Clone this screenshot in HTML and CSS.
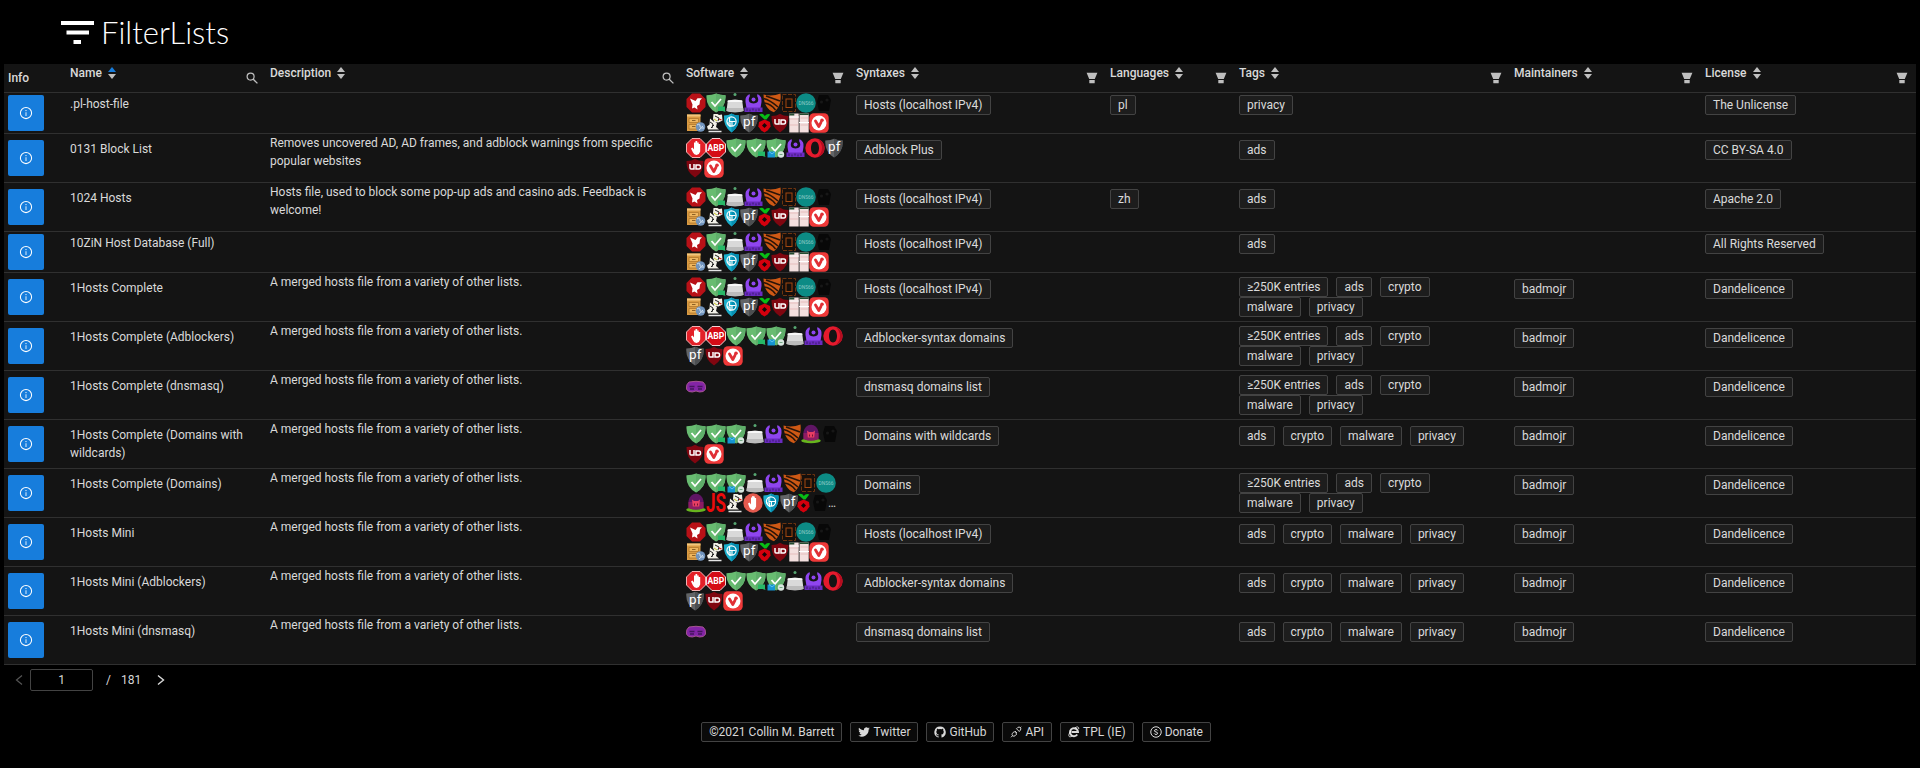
FILE: index.html
```html
<!DOCTYPE html>
<html lang="en">
<head>
<meta charset="utf-8">
<title>FilterLists</title>
<link rel="stylesheet" href="styles.css">
</head>
<body>
<svg class="sprite" aria-hidden="true">
  <symbol id="info" viewBox="0 0 1024 1024"><path d="M512 64a448 448 0 1 0 0 896 448 448 0 0 0 0-896zm0 820a372 372 0 1 1 0-744 372 372 0 0 1 0 744z"/><path d="M464 336a48 48 0 1 0 96 0 48 48 0 0 0-96 0zm72 112h-48a8 8 0 0 0-8 8v272a8 8 0 0 0 8 8h48a8 8 0 0 0 8-8V456a8 8 0 0 0-8-8z"/></symbol>
  <symbol id="search" viewBox="0 0 12 12"><circle cx="4.600" cy="4.600" r="3.500" fill="none" stroke="currentColor" stroke-width="1.200"/><path d="M7 7l4.400 4.400" stroke="currentColor" stroke-width="1.300"/></symbol>
  <symbol id="funnel" viewBox="0 0 12 12"><path d="M.6.800h10.800L8.800 7H3.200zM3.300 7.900h5.400v2.800q0 .5-.5.500H3.800q-.5 0-.5-.5z" fill="currentColor"/></symbol>
  <symbol id="dove" viewBox="0 0 20 20"><path d="M6 .5h8L19.500 6v8L14 19.500H6L.5 14V6z" fill="#b81117"/><path d="M4 5.500l5.500 2.500 2-2.800 4.500 0-2 2.200-.5 4-2.500 1.500.5 3.500-3-2-2.500 1 .5-4z" fill="#fff"/></symbol>
  <symbol id="shield" viewBox="0 0 20 20"><path d="M.5 2.300Q6 2.200 10 .6q4 1.600 9.500 1.700.8 11.200-9.500 17.200Q-.3 13.500.5 2.300z" fill="#68bc71"/><path d="M10 .6q4 1.600 9.500 1.700.8 11.200-9.500 17.200z" fill="#5fae6a"/><path d="M5.500 9l3.500 4 6-7" fill="none" stroke="#fff" stroke-width="1.800"/></symbol>
  <symbol id="shield-chat" viewBox="0 0 20 20"><use href="#shield" width="20" height="20"/><path d="M12 13.500h7v4l.5 1.500-3-1H12z" fill="#27b867"/></symbol>
  <symbol id="shield-beta" viewBox="0 0 20 20"><use href="#shield" width="20" height="20"/><path d="M1.500 13.500h7.500v6h-7.500z" fill="#1595d2"/><path d="M3 13.500L6 16l3-2.500" stroke="#61c2ee" fill="none"/><circle cx="15" cy="16.500" r="3.200" fill="#d8e6df"/><path d="M13.500 16.500h3" stroke="#73a783"/></symbol>
  <symbol id="router" viewBox="0 0 18 20"><circle cx="9" cy="1.600" r="1.500" fill="#57a772"/><path d="M1.800 7.500Q9 6 16.200 7.500l1.300 10.500Q9 20.500.5 18z" fill="#d9d9d9"/><path d="M.8 15h16.400l.3 3Q9 20.500.5 18z" fill="#bcbcbc"/><path d="M1.800 7.500Q9 6 16.200 7.500l.2 1.500H1.600z" fill="#f8f8f8"/></symbol>
  <symbol id="brush" viewBox="0 0 19 20"><path d="M5.500 1Q.6 3.500 1.500 9L2.500 15h14l1-6Q18.400 3.500 13.500 1 12.500 3 14 5q1.500 5-4.500 5.500Q3.500 10 5 5 6.500 3 5.500 1z" fill="#8f45ef"/><circle cx="9.500" cy="6.500" r="2" fill="#8f45ef"/><path d="M.5 14.500h18v4.500H.5z" fill="#6a2bc0"/><path d="M3 15.500v2.500M6 16.500v2M9 15.500v2M12 16.500v2M15 15.500v2.500" stroke="#3a1a68"/></symbol>
  <symbol id="stripes" viewBox="0 0 18 20"><path d="M.5 1.500Q9 4 17.500.6 19 13 11 19.200 1 16 .5 1.500z" fill="#cf5915"/><path d="M.5 5.500Q7 7 15 14M3 3l14 5M1.500 10Q8 11 12.500 17" stroke="#2a1408" stroke-width="1.600" fill="none"/></symbol>
  <symbol id="frame" viewBox="0 0 14 20"><rect x=".5" y="1.500" width="13" height="17" fill="#160f0b" stroke="#6d3410" stroke-dasharray="4 1.500"/><rect x="4" y="6" width="6" height="8.500" fill="none" stroke="#a44911"/></symbol>
  <symbol id="dnscloak" viewBox="0 0 20 20"><circle cx="10" cy="10" r="9.800" fill="#0c8b85"/><text x="10" y="12" font-size="4.800" text-anchor="middle" fill="#8fc9c5" class="ico-text">DNS66</text></symbol>
  <symbol id="dark" viewBox="0 0 16 20"><path d="M3 2h9l3 5-2 11H3L1 9z" fill="#080808"/><circle cx="5.500" cy="9" r="1.600" fill="#171717"/><circle cx="11" cy="7" r="1.600" fill="#171717"/></symbol>
  <symbol id="cabinet" viewBox="0 0 20 20"><path d="M1 1.500h13.500v16.500H1z" fill="#d99a42"/><path d="M1 1.500h13.500v2H1z" fill="#f4c67c"/><path d="M3 5.500h9.500v4H3zM3 11.500h9.500v4.500H3z" fill="#efb65e" stroke="#b0772c" stroke-width=".8"/><path d="M6 7.500h3.500M6 13.500h3.500" stroke="#8c6126"/><circle cx="14.500" cy="14" r="4.800" fill="#7194bd"/><path d="M11 12q3-2 3 1t3 0M13 17q2-3 5-2" stroke="#d0e2f2" fill="none"/></symbol>
  <symbol id="pieces" viewBox="0 0 18 20"><path d="M7.500 1h4l1.500 1 3-.5.500 6-4 2-4-.5-1.500-3zM4 5.500l3.500 3 3.500 1.500-1 4 3 2.500H2l-1-3 2.500-2z" fill="#f3f1e8"/><path d="M9 3l4 2-1 3M4 9l3 2-1 4M8 12l-3 3" stroke="#222" fill="none"/><path d="M8 6l3 2" stroke="#c9cc25"/><path d="M13 6l2.500 1" stroke="#d81b1b" stroke-width="1.300"/><path d="M2.500 18.500h13" stroke="#e6e6e6" stroke-width="1.500"/></symbol>
  <symbol id="cyan" viewBox="0 0 16 20"><path d="M.5 2.500Q5 2.500 8 .5q3 2 7.500 2 1 11-7.500 17Q-.5 13.500.5 2.500z" fill="#1aaecb"/><path d="M8 .5q3 2 7.500 2 1 11-7.500 17z" fill="#078fb2"/><circle cx="8" cy="8.500" r="4.600" fill="none" stroke="#fff" stroke-width="1.200"/><path d="M6 4.500v4h6M8.500 8.500v4.500M3.500 10h3v4" stroke="#fff" stroke-width="1.100" fill="none"/></symbol>
  <symbol id="pf" viewBox="0 0 18 20"><path d="M.3 2.500Q6 2.500 9 .8q3 1.700 8.700 1.700.8 11-8.700 17Q-.5 13.500.3 2.500z" fill="#626466"/><path d="M9 .8q3 1.700 8.700 1.700.8 11-8.700 17z" fill="#4c4e50"/><text x="9.200" y="12.500" font-size="13.500" text-anchor="middle" fill="#fff" class="ico-text">pf</text></symbol>
  <symbol id="berry" viewBox="0 0 13 20"><path d="M6.500 6.500L1 1.500Q5-.5 6.800 3 9 .2 12.300 1.500L8.500 6.500z" fill="#08bd16"/><path d="M6.500 6.500l5.500 2.500.6 4.500-3 4-3.100 2-3.200-2-3-4L1 9z" fill="#d4000d"/><path d="M6.500 10L9 12.500l-2.500 2.500L4 12.500z" fill="#160508"/></symbol>
  <symbol id="ublock" viewBox="0 0 18 20"><path d="M.5 3Q6 3 9 .7 12 3 17.500 3q.5 11-8.500 16.500Q0 14 .5 3z" fill="#800610"/><path d="M4 6v4q0 1 1 1h3v-5M10 7h3q1.500 0 1.500 2t-1.500 2h-3z" fill="none" stroke="#fff" stroke-width="1.500"/></symbol>
  <symbol id="pages" viewBox="0 0 20 20"><path d="M.3.500h9.400v19H.3zM10.500.500h9.200v19h-9.200z" fill="#f4e0df"/><path d="M.3.500h5v2h-5zM10.500.500h9.200v1.500h-9.200z" fill="#244c30"/><path d="M1 6h8M1 12h8M11.500 5h7.500M11.500 12h7.500" stroke="#e6bdbc"/><path d="M0 4h10M10 9.500h10" stroke="#fff"/></symbol>
  <symbol id="vivaldi" viewBox="0 0 20 20"><rect x=".3" y=".3" width="19.400" height="19.400" rx="4.500" fill="#ef3939"/><circle cx="10" cy="10" r="7.500" fill="#fff"/><path d="M6.500 8l3.300 5.500L12 9.300" fill="none" stroke="#e02f35" stroke-width="2.800" stroke-linecap="round" stroke-linejoin="round"/><circle cx="13" cy="7.200" r="1.800" fill="#e02f35"/></symbol>
  <symbol id="hand" viewBox="0 0 20 20"><path d="M6 .5h8L19.500 6v8L14 19.500H6L.5 14V6z" fill="#e32028" stroke="#f3b0b1"/><path d="M5 10.500l1.500-1 1.500 2v-7h1.500V3h1.700v1.500h1.500V6h1.500v7.500q-.7 3-3.700 3.500-2.500-.3-3.500-2.500z" fill="#fff"/></symbol>
  <symbol id="hand-round" viewBox="0 0 20 20"><circle cx="10" cy="10" r="9.700" fill="#e45a4e"/><path d="M5 10.500l1.500-1 1.500 2v-7h1.200V3h1.300v7V3.500h1.300V10 5h1.300v8.500q-.7 3-3 3.500-2.500-.3-3.600-2.500z" fill="#fff"/></symbol>
  <symbol id="abp" viewBox="0 0 20 20"><path d="M6 .5h8L19.500 6v8L14 19.500H6L.5 14V6z" fill="#d50c16" stroke="#f4d3d4"/><text x="10" y="13" font-size="8.600" text-anchor="middle" fill="#fff" class="ico-bold">ABP</text></symbol>
  <symbol id="opera" viewBox="0 0 20 20"><path fill-rule="evenodd" d="M10 .3a9.700 9.700 0 1 0 0 19.400A9.700 9.700 0 0 0 10 .3zm0 3.200c2.300 0 4 2.800 4 6.500s-1.700 6.500-4 6.500S6 13.700 6 10s1.700-6.500 4-6.500z" fill="#e51a2d"/><path d="M12.500 1Q20 4 19.500 11q-1 6.500-7 8.200Q17 15 17 10T12.500 1z" fill="#b50d20"/></symbol>
  <symbol id="dome" viewBox="0 0 20 20"><ellipse cx="10" cy="16.800" rx="9.800" ry="2.500" fill="#67b51e"/><path d="M2.500 15V8Q4 1 10 .8 16 1 17.500 8v7Q10 18 2.500 15z" fill="#5f1564"/><path d="M2.500 9h15v6Q10 18 2.500 15z" fill="#8d1c63"/><path d="M6 6.500l2 1.500h4l2-1.500-.8 7H6.800z" fill="#e83e63"/><path d="M8.500 10.500v2M11.500 10.500v2" stroke="#701335"/></symbol>
  <symbol id="js" viewBox="0 0 20 20"><text x="10" y="18.800" font-size="25" text-anchor="middle" fill="#ed0b0b" class="ico-bold" textLength="20" lengthAdjust="spacingAndGlyphs">JS</text></symbol>
  <symbol id="mask" viewBox="0 0 20 20"><path d="M3 5Q10 3.500 17 5q3 2 2.600 7-1.600 3.500-6 3L10 14l-3.600 1q-4.400.5-6-3Q0 7 3 5z" fill="#8324a6" stroke="#ad5b94" stroke-width=".9"/><path d="M3.500 9.500h5M11.500 9.500h5M4 12h4M12 12h4" stroke="#43155c" stroke-width="1.300"/></symbol>

  <symbol id="set-hosts" viewBox="0 0 160 40">
    <use href="#dove" width="20" height="20"/><use href="#shield-chat" x="20" width="20" height="20"/><use href="#router" x="40" width="18" height="20"/><use href="#brush" x="58" width="19" height="20"/><use href="#stripes" x="77" width="18" height="20"/><use href="#frame" x="96" width="14" height="20"/><use href="#dnscloak" x="110" width="20" height="20"/><use href="#dark" x="130" width="16" height="20"/>
    <use href="#cabinet" y="20" width="20" height="20"/><use href="#pieces" x="20" y="20" width="18" height="20"/><use href="#cyan" x="37.500" y="20" width="16" height="20"/><use href="#pf" x="54" y="20" width="18" height="20"/><use href="#berry" x="72" y="20" width="13" height="20"/><use href="#ublock" x="85" y="20" width="18" height="20"/><use href="#pages" x="103" y="20" width="20" height="20"/><use href="#vivaldi" x="123" y="20" width="20" height="20"/>
  </symbol>
  <symbol id="set-abp" viewBox="0 0 160 40">
    <use href="#hand" width="20" height="20"/><use href="#abp" x="20" width="20" height="20"/><use href="#shield" x="40" width="20" height="20"/><use href="#shield-chat" x="60" width="20" height="20"/><use href="#shield-beta" x="80" width="20" height="20"/><use href="#brush" x="100" width="19" height="20"/><use href="#opera" x="119" width="20" height="20"/><use href="#pf" x="139" width="18" height="20"/>
    <use href="#ublock" y="20" width="18" height="20"/><use href="#vivaldi" x="18" y="20" width="20" height="20"/>
  </symbol>
  <symbol id="set-adblockers" viewBox="0 0 160 40">
    <use href="#hand" width="20" height="20"/><use href="#abp" x="20" width="20" height="20"/><use href="#shield" x="40" width="20" height="20"/><use href="#shield-chat" x="60" width="20" height="20"/><use href="#shield-beta" x="80" width="20" height="20"/><use href="#router" x="100" width="18" height="20"/><use href="#brush" x="118" width="19" height="20"/><use href="#opera" x="137" width="20" height="20"/>
    <use href="#pf" y="20" width="18" height="20"/><use href="#ublock" x="19" y="20" width="18" height="20"/><use href="#vivaldi" x="37" y="20" width="20" height="20"/>
  </symbol>
  <symbol id="set-wildcards" viewBox="0 0 160 40">
    <use href="#shield" width="20" height="20"/><use href="#shield-chat" x="20" width="20" height="20"/><use href="#shield-beta" x="40" width="20" height="20"/><use href="#router" x="60" width="18" height="20"/><use href="#brush" x="78" width="19" height="20"/><use href="#stripes" x="97" width="18" height="20"/><use href="#dome" x="115" width="20" height="20"/><use href="#dark" x="136" width="16" height="20"/>
    <use href="#ublock" y="20" width="18" height="20"/><use href="#vivaldi" x="18" y="20" width="20" height="20"/>
  </symbol>
  <symbol id="set-domains" viewBox="0 0 160 40">
    <use href="#shield" width="20" height="20"/><use href="#shield-chat" x="20" width="20" height="20"/><use href="#shield-beta" x="40" width="20" height="20"/><use href="#router" x="60" width="18" height="20"/><use href="#brush" x="78" width="19" height="20"/><use href="#stripes" x="97" width="18" height="20"/><use href="#frame" x="115" width="14" height="20"/><use href="#dnscloak" x="130" width="20" height="20"/>
    <use href="#dome" y="20" width="20" height="20"/><use href="#js" x="20" y="20" width="20" height="20"/><use href="#pieces" x="40" y="20" width="18" height="20"/><use href="#hand-round" x="57" y="20" width="20" height="20"/><use href="#cyan" x="77" y="20" width="16" height="20"/><use href="#pf" x="94" y="20" width="18" height="20"/><use href="#berry" x="111" y="20" width="13" height="20"/><use href="#dark" x="126" y="20" width="16" height="20"/>
    <text x="142" y="33.500" font-size="12" fill="#d0d0d0" class="ico-text">…</text>
  </symbol>
</svg>

<header class="site-header">
  <svg class="logo-mark" viewBox="0 0 33 23"><path d="M0 0h33v4H0zM5.500 9.500h22.500v4H5.500zM12.500 19h7.500v4h-7.500z" fill="#fff"/></svg>
  <h1 class="logo-text">FilterLists</h1>
</header>

<main class="table">
  <div class="row head">
    <div class="cell info-head">Info</div>
    <div class="cell"><span class="label">Name</span><span class="sort asc"></span><svg class="filter"><use href="#search"/></svg></div>
    <div class="cell"><span class="label">Description</span><span class="sort"></span><svg class="filter"><use href="#search"/></svg></div>
    <div class="cell"><span class="label">Software</span><span class="sort"></span><svg class="filter"><use href="#funnel"/></svg></div>
    <div class="cell"><span class="label">Syntaxes</span><span class="sort"></span><svg class="filter"><use href="#funnel"/></svg></div>
    <div class="cell"><span class="label">Languages</span><span class="sort"></span><svg class="filter"><use href="#funnel"/></svg></div>
    <div class="cell"><span class="label">Tags</span><span class="sort"></span><svg class="filter"><use href="#funnel"/></svg></div>
    <div class="cell"><span class="label">Maintainers</span><span class="sort"></span><svg class="filter"><use href="#funnel"/></svg></div>
    <div class="cell"><span class="label">License</span><span class="sort"></span><svg class="filter"><use href="#funnel"/></svg></div>
  </div>

  <div class="row short">
    <div class="cell"><button class="info"><svg><use href="#info"/></svg></button></div>
    <div class="cell name">.pl-host-file</div>
    <div class="cell desc"></div>
    <div class="cell"><svg class="set"><use href="#set-hosts"/></svg></div>
    <div class="cell tags"><span class="tag">Hosts (localhost IPv4)</span></div>
    <div class="cell tags"><span class="tag">pl</span></div>
    <div class="cell tags"><span class="tag">privacy</span></div>
    <div class="cell tags"></div>
    <div class="cell tags"><span class="tag">The Unlicense</span></div>
  </div>
  <div class="row">
    <div class="cell"><button class="info"><svg><use href="#info"/></svg></button></div>
    <div class="cell name">0131 Block List</div>
    <div class="cell desc">Removes uncovered AD, AD frames, and adblock warnings from specific popular websites</div>
    <div class="cell"><svg class="set"><use href="#set-abp"/></svg></div>
    <div class="cell tags"><span class="tag">Adblock Plus</span></div>
    <div class="cell tags"></div>
    <div class="cell tags"><span class="tag">ads</span></div>
    <div class="cell tags"></div>
    <div class="cell tags"><span class="tag">CC BY-SA 4.0</span></div>
  </div>
  <div class="row">
    <div class="cell"><button class="info"><svg><use href="#info"/></svg></button></div>
    <div class="cell name">1024 Hosts</div>
    <div class="cell desc">Hosts file, used to block some pop-up ads and casino ads. Feedback is welcome!</div>
    <div class="cell"><svg class="set"><use href="#set-hosts"/></svg></div>
    <div class="cell tags"><span class="tag">Hosts (localhost IPv4)</span></div>
    <div class="cell tags"><span class="tag">zh</span></div>
    <div class="cell tags"><span class="tag">ads</span></div>
    <div class="cell tags"></div>
    <div class="cell tags"><span class="tag">Apache 2.0</span></div>
  </div>
  <div class="row short">
    <div class="cell"><button class="info"><svg><use href="#info"/></svg></button></div>
    <div class="cell name">10ZiN Host Database (Full)</div>
    <div class="cell desc"></div>
    <div class="cell"><svg class="set"><use href="#set-hosts"/></svg></div>
    <div class="cell tags"><span class="tag">Hosts (localhost IPv4)</span></div>
    <div class="cell tags"></div>
    <div class="cell tags"><span class="tag">ads</span></div>
    <div class="cell tags"></div>
    <div class="cell tags"><span class="tag">All Rights Reserved</span></div>
  </div>
  <div class="row">
    <div class="cell"><button class="info"><svg><use href="#info"/></svg></button></div>
    <div class="cell name">1Hosts Complete</div>
    <div class="cell desc">A merged hosts file from a variety of other lists.</div>
    <div class="cell"><svg class="set"><use href="#set-hosts"/></svg></div>
    <div class="cell tags"><span class="tag">Hosts (localhost IPv4)</span></div>
    <div class="cell tags"></div>
    <div class="cell tags double"><span class="tag">≥250K entries</span><span class="tag">ads</span><span class="tag">crypto</span><span class="tag">malware</span><span class="tag">privacy</span></div>
    <div class="cell tags"><span class="tag">badmojr</span></div>
    <div class="cell tags"><span class="tag">Dandelicence</span></div>
  </div>
  <div class="row">
    <div class="cell"><button class="info"><svg><use href="#info"/></svg></button></div>
    <div class="cell name">1Hosts Complete (Adblockers)</div>
    <div class="cell desc">A merged hosts file from a variety of other lists.</div>
    <div class="cell"><svg class="set"><use href="#set-adblockers"/></svg></div>
    <div class="cell tags"><span class="tag">Adblocker-syntax domains</span></div>
    <div class="cell tags"></div>
    <div class="cell tags double"><span class="tag">≥250K entries</span><span class="tag">ads</span><span class="tag">crypto</span><span class="tag">malware</span><span class="tag">privacy</span></div>
    <div class="cell tags"><span class="tag">badmojr</span></div>
    <div class="cell tags"><span class="tag">Dandelicence</span></div>
  </div>
  <div class="row">
    <div class="cell"><button class="info"><svg><use href="#info"/></svg></button></div>
    <div class="cell name">1Hosts Complete (dnsmasq)</div>
    <div class="cell desc">A merged hosts file from a variety of other lists.</div>
    <div class="cell"><svg class="single"><use href="#mask"/></svg></div>
    <div class="cell tags"><span class="tag">dnsmasq domains list</span></div>
    <div class="cell tags"></div>
    <div class="cell tags double"><span class="tag">≥250K entries</span><span class="tag">ads</span><span class="tag">crypto</span><span class="tag">malware</span><span class="tag">privacy</span></div>
    <div class="cell tags"><span class="tag">badmojr</span></div>
    <div class="cell tags"><span class="tag">Dandelicence</span></div>
  </div>
  <div class="row">
    <div class="cell"><button class="info"><svg><use href="#info"/></svg></button></div>
    <div class="cell name">1Hosts Complete (Domains with wildcards)</div>
    <div class="cell desc">A merged hosts file from a variety of other lists.</div>
    <div class="cell"><svg class="set"><use href="#set-wildcards"/></svg></div>
    <div class="cell tags"><span class="tag">Domains with wildcards</span></div>
    <div class="cell tags"></div>
    <div class="cell tags"><span class="tag">ads</span><span class="tag">crypto</span><span class="tag">malware</span><span class="tag">privacy</span></div>
    <div class="cell tags"><span class="tag">badmojr</span></div>
    <div class="cell tags"><span class="tag">Dandelicence</span></div>
  </div>
  <div class="row">
    <div class="cell"><button class="info"><svg><use href="#info"/></svg></button></div>
    <div class="cell name">1Hosts Complete (Domains)</div>
    <div class="cell desc">A merged hosts file from a variety of other lists.</div>
    <div class="cell"><svg class="set"><use href="#set-domains"/></svg></div>
    <div class="cell tags"><span class="tag">Domains</span></div>
    <div class="cell tags"></div>
    <div class="cell tags double"><span class="tag">≥250K entries</span><span class="tag">ads</span><span class="tag">crypto</span><span class="tag">malware</span><span class="tag">privacy</span></div>
    <div class="cell tags"><span class="tag">badmojr</span></div>
    <div class="cell tags"><span class="tag">Dandelicence</span></div>
  </div>
  <div class="row">
    <div class="cell"><button class="info"><svg><use href="#info"/></svg></button></div>
    <div class="cell name">1Hosts Mini</div>
    <div class="cell desc">A merged hosts file from a variety of other lists.</div>
    <div class="cell"><svg class="set"><use href="#set-hosts"/></svg></div>
    <div class="cell tags"><span class="tag">Hosts (localhost IPv4)</span></div>
    <div class="cell tags"></div>
    <div class="cell tags"><span class="tag">ads</span><span class="tag">crypto</span><span class="tag">malware</span><span class="tag">privacy</span></div>
    <div class="cell tags"><span class="tag">badmojr</span></div>
    <div class="cell tags"><span class="tag">Dandelicence</span></div>
  </div>
  <div class="row">
    <div class="cell"><button class="info"><svg><use href="#info"/></svg></button></div>
    <div class="cell name">1Hosts Mini (Adblockers)</div>
    <div class="cell desc">A merged hosts file from a variety of other lists.</div>
    <div class="cell"><svg class="set"><use href="#set-adblockers"/></svg></div>
    <div class="cell tags"><span class="tag">Adblocker-syntax domains</span></div>
    <div class="cell tags"></div>
    <div class="cell tags"><span class="tag">ads</span><span class="tag">crypto</span><span class="tag">malware</span><span class="tag">privacy</span></div>
    <div class="cell tags"><span class="tag">badmojr</span></div>
    <div class="cell tags"><span class="tag">Dandelicence</span></div>
  </div>
  <div class="row">
    <div class="cell"><button class="info"><svg><use href="#info"/></svg></button></div>
    <div class="cell name">1Hosts Mini (dnsmasq)</div>
    <div class="cell desc">A merged hosts file from a variety of other lists.</div>
    <div class="cell"><svg class="single"><use href="#mask"/></svg></div>
    <div class="cell tags"><span class="tag">dnsmasq domains list</span></div>
    <div class="cell tags"></div>
    <div class="cell tags"><span class="tag">ads</span><span class="tag">crypto</span><span class="tag">malware</span><span class="tag">privacy</span></div>
    <div class="cell tags"><span class="tag">badmojr</span></div>
    <div class="cell tags"><span class="tag">Dandelicence</span></div>
  </div>
</main>

<nav class="pager">
  <svg class="arrow disabled" viewBox="0 0 8 12"><path d="M7 1.500L1.500 6 7 10.500" fill="none" stroke="currentColor" stroke-width="1.200"/></svg>
  <span class="page-input">1</span>
  <span class="slash">/</span>
  <span class="total">181</span>
  <svg class="arrow" viewBox="0 0 8 12"><path d="M1 1.500L6.500 6 1 10.500" fill="none" stroke="currentColor" stroke-width="1.400"/></svg>
</nav>

<footer class="site-footer">
  <span class="tag">©2021 Collin M. Barrett</span>
  <span class="tag"><svg viewBox="0 0 24 24"><path fill="currentColor" d="M23.600 4.900c-.8.400-1.700.6-2.700.8 1-.6 1.700-1.500 2-2.600-.9.500-1.900.9-3 1.100a4.700 4.700 0 0 0-8 4.300C8 8.300 4.500 6.400 2.100 3.500a4.700 4.700 0 0 0 1.500 6.200c-.8 0-1.500-.2-2.100-.6v.1c0 2.300 1.600 4.200 3.800 4.600-.7.200-1.400.2-2.100.1.600 1.800 2.300 3.200 4.400 3.200A9.400 9.400 0 0 1 .6 19 13.300 13.300 0 0 0 21.200 7.200c1-.6 1.800-1.400 2.400-2.300z"/></svg>Twitter</span>
  <span class="tag"><svg viewBox="0 0 24 24"><path fill="currentColor" d="M12 1a11.300 11.300 0 0 0-3.600 22c.6.100.8-.3.800-.6v-2c-3.200.7-3.900-1.500-3.900-1.500-.5-1.300-1.200-1.700-1.200-1.700-1-.7.100-.7.100-.7 1.100.1 1.700 1.200 1.700 1.200 1 1.700 2.700 1.200 3.300.9.100-.7.400-1.200.7-1.500-2.600-.3-5.200-1.300-5.200-5.700 0-1.200.4-2.300 1.200-3.100-.1-.3-.5-1.500.1-3 0 0 1-.3 3.200 1.200a11 11 0 0 1 5.800 0c2.200-1.500 3.200-1.200 3.200-1.200.6 1.500.2 2.700.1 3 .8.800 1.200 1.800 1.200 3.100 0 4.400-2.700 5.400-5.300 5.700.4.300.8 1 .8 2.100v3.200c0 .3.200.7.800.6A11.300 11.300 0 0 0 12 1z"/></svg>GitHub</span>
  <span class="tag"><svg viewBox="0 0 24 24"><g fill="none" stroke="currentColor" stroke-width="1.900"><path d="M13 5.500l2.500-2.500q3-2 5 .2 2.300 2.300.3 5L18.500 11zM20.500 3.500L22.500 1.500M11 13.500L8.500 11 5 14.500q-2 2.700.2 5 2.500 2 5 0L13.500 16zM5 19.500l-3 3M10 12l2-2M12 14l2-2"/></g></svg>API</span>
  <span class="tag"><svg viewBox="0 0 24 24"><path d="M18.500 17A8 8 0 1 1 20 12H7" fill="none" stroke="currentColor" stroke-width="4"/><path d="M14 3.500Q22-1 21.500 6M6 9Q-1 19 3 21.500q2.500.5 5-1.500" fill="none" stroke="currentColor" stroke-width="1.800"/></svg>TPL (IE)</span>
  <span class="tag"><svg viewBox="0 0 24 24"><circle cx="12" cy="12" r="10.500" fill="none" stroke="currentColor" stroke-width="2"/><path d="M15.500 9Q14.500 7 12 7.200 8.800 7.300 8.800 9.500q0 1.800 3.200 2.400t3.200 2.600q0 2.300-3.200 2.400-2.700 0-3.600-2" fill="none" stroke="currentColor" stroke-width="2"/></svg>Donate</span>
</footer>
</body>
</html>
```
FILE: styles.css
```css
* { box-sizing: border-box; }

body {
  margin: 0;
  background: #000;
  color: rgba(255, 255, 255, .85);
  font: 12px/18px Roboto, "Liberation Sans", sans-serif;
}

.sprite { display: none; }
.ico-text { font-family: Roboto, sans-serif; }
.ico-bold { font-family: Roboto, sans-serif; font-weight: 700; }

.site-header {
  display: flex;
  align-items: flex-start;
  height: 64px;
  padding-left: 61px;
}
.logo-mark { width: 33px; height: 23px; margin-top: 21px; }
.logo-text {
  margin: 12px 0 0 7px;
  color: #fff;
  font: 300 31px/40px Lato, sans-serif;
}

.table { margin: 0 4px; background: #141414; }
.row {
  display: grid;
  grid-template-columns: 62px 200px 416px 170px 254px 129px 275px 191px 1fr;
  height: 49px;
  border-bottom: 1px solid #303030;
}
.row.short { height: 41px; }
.row.head { height: 29px; font-weight: 500; }
.cell { min-width: 0; padding-left: 4px; align-self: center; }

.head .cell { display: flex; align-items: flex-start; align-self: stretch; }
.head .info-head { padding-top: 5px; }
.sort {
  display: grid;
  gap: 2px;
  margin: 3px 0 0 6px;
  color: #bfbfbf;
}
.sort::before, .sort::after {
  content: "";
  border: 4px solid transparent;
}
.sort::before { border-top: 0; border-bottom: 5px solid currentColor; }
.sort::after { border-bottom: 0; border-top: 5px solid currentColor; }
.sort.asc::before { border-bottom-color: #177ddc; }
.filter { width: 12px; height: 12px; margin: 8px 8px 0 auto; color: #bfbfbf; }

.info {
  display: flex;
  align-items: center;
  justify-content: center;
  width: 36px;
  height: 36px;
  padding: 0;
  border: 0;
  border-radius: 2px;
  background: #177ddc;
  color: #fff;
}
.info svg { width: 14px; height: 14px; fill: currentColor; }

.name { height: 36px; padding-right: 8px; }
.desc { align-self: start; padding-right: 8px; }
.set { display: block; width: 160px; height: 40px; }
.single { display: block; width: 20px; height: 20px; margin-bottom: 16px; }

.tags {
  display: flex;
  flex-wrap: wrap;
  align-content: flex-start;
  column-gap: 8px;
  height: 36px;
  padding-right: 24px;
}
.tags.double { height: 40px; }
.tag {
  display: inline-flex;
  align-items: center;
  height: 20px;
  padding: 0 7px;
  border: 1px solid #434343;
  border-radius: 2px;
  background: rgba(255, 255, 255, .04);
  white-space: nowrap;
}

.pager {
  display: flex;
  align-items: center;
  height: 22px;
  margin-top: 4px;
  padding-left: 15px;
}
.arrow { width: 8px; height: 12px; }
.arrow.disabled { color: #555; }
.page-input {
  width: 63px;
  height: 22px;
  margin-left: 7px;
  border: 1px solid #434343;
  border-radius: 2px;
  line-height: 20px;
  text-align: center;
}
.slash { margin-left: 13px; }
.total { margin: 0 16px 0 10px; }

.site-footer {
  display: flex;
  justify-content: center;
  gap: 8px;
  margin-top: 31px;
  padding-right: 8px;
}
.site-footer svg { width: 12px; height: 12px; margin-right: 3px; }
```
